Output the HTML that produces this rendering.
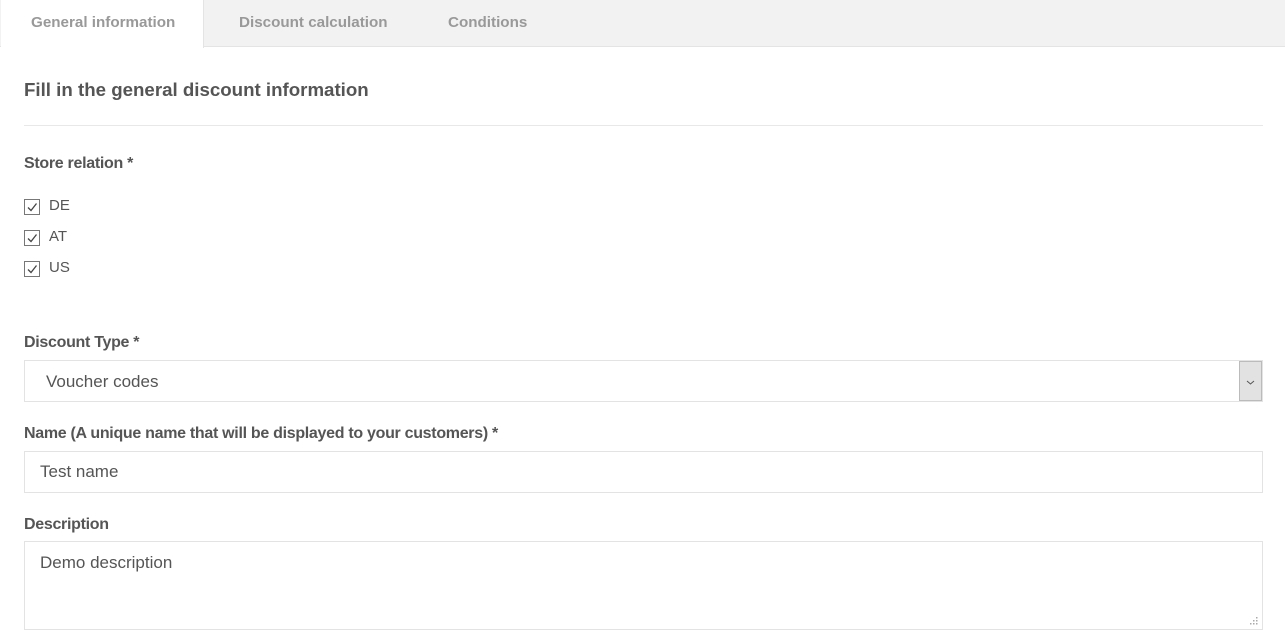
<!DOCTYPE html>
<html><head><style>
*{box-sizing:border-box;margin:0;padding:0}
body{width:1285px;height:636px;background:#fff;font-family:"Liberation Sans",sans-serif;color:#555;position:relative;overflow:hidden}
.a{position:absolute;white-space:nowrap}
.tabbar{position:absolute;left:0;top:0;width:1285px;height:47px;background:#f2f2f2;border-bottom:1px solid #e4e4e4}
.tab{position:absolute;top:14px;font-size:15.2px;font-weight:bold;color:#999}
.lbl{font-size:16px;font-weight:bold;color:#555;letter-spacing:-0.3px}
.cb{position:absolute;left:24px;width:16px;height:16px;border:1px solid #777;background:#fff}
.cb svg{position:absolute;left:1px;top:1px}
.cbl{font-size:15px;color:#555}
.box{position:absolute;left:24px;width:1239px;border:1px solid #e3e3e3;background:#fff}
.val{font-size:17px;color:#555}
</style></head><body>
<div class="tabbar"></div>
<div class="a" style="left:1px;top:0;width:203px;height:48px;background:#fff;border-right:1px solid #e4e4e4"></div>
<div class="tab a" style="left:31px">General information</div>
<div class="tab a" style="left:239px">Discount calculation</div>
<div class="tab a" style="left:448px">Conditions</div>
<div class="a" style="left:24px;top:79px;font-size:18.7px;font-weight:bold;color:#555">Fill in the general discount information</div>
<div class="a" style="left:24px;top:125px;width:1239px;height:1px;background:#e8e8e8"></div>
<div class="a lbl" style="left:24px;top:155px">Store relation *</div>
<div class="cb" style="top:199px"><svg width="12" height="12" viewBox="0 0 12 12"><path d="M2 6.5L5 9.5L10.5 2.5" stroke="#444" stroke-width="1.3" fill="none"/></svg></div>
<div class="a cbl" style="left:49px;top:197px">DE</div>
<div class="cb" style="top:230px"><svg width="12" height="12" viewBox="0 0 12 12"><path d="M2 6.5L5 9.5L10.5 2.5" stroke="#444" stroke-width="1.3" fill="none"/></svg></div>
<div class="a cbl" style="left:49px;top:228px">AT</div>
<div class="cb" style="top:261px"><svg width="12" height="12" viewBox="0 0 12 12"><path d="M2 6.5L5 9.5L10.5 2.5" stroke="#444" stroke-width="1.3" fill="none"/></svg></div>
<div class="a cbl" style="left:49px;top:259px">US</div>
<div class="a lbl" style="left:24px;top:334px">Discount Type *</div>
<div class="box" style="top:360px;height:42px"></div>
<div class="a val" style="left:46px;top:372px">Voucher codes</div>
<div class="a" style="left:1239px;top:361px;width:23px;height:40px;background:#e2e2e2;border:1px solid #bbb"><svg width="21" height="38" viewBox="0 0 21 38"><path d="M7 19L10.5 22L14 19" stroke="#555" stroke-width="1" fill="none"/></svg></div>
<div class="a lbl" style="left:24px;top:425px">Name (A unique name that will be displayed to your customers) *</div>
<div class="box" style="top:451px;height:42px"></div>
<div class="a val" style="left:40px;top:462px">Test name</div>
<div class="a lbl" style="left:24px;top:516px">Description</div>
<div class="box" style="top:541px;height:89px"></div>
<div class="a val" style="left:40px;top:553px">Demo description</div>
<svg class="a" style="left:1249px;top:616px" width="10" height="10"><g fill="#aaa"><rect x="7" y="1" width="1.5" height="1.5"/><rect x="4" y="4" width="1.5" height="1.5"/><rect x="7" y="4" width="1.5" height="1.5"/><rect x="1" y="7" width="1.5" height="1.5"/><rect x="4" y="7" width="1.5" height="1.5"/><rect x="7" y="7" width="1.5" height="1.5"/></g></svg>
</body></html>
